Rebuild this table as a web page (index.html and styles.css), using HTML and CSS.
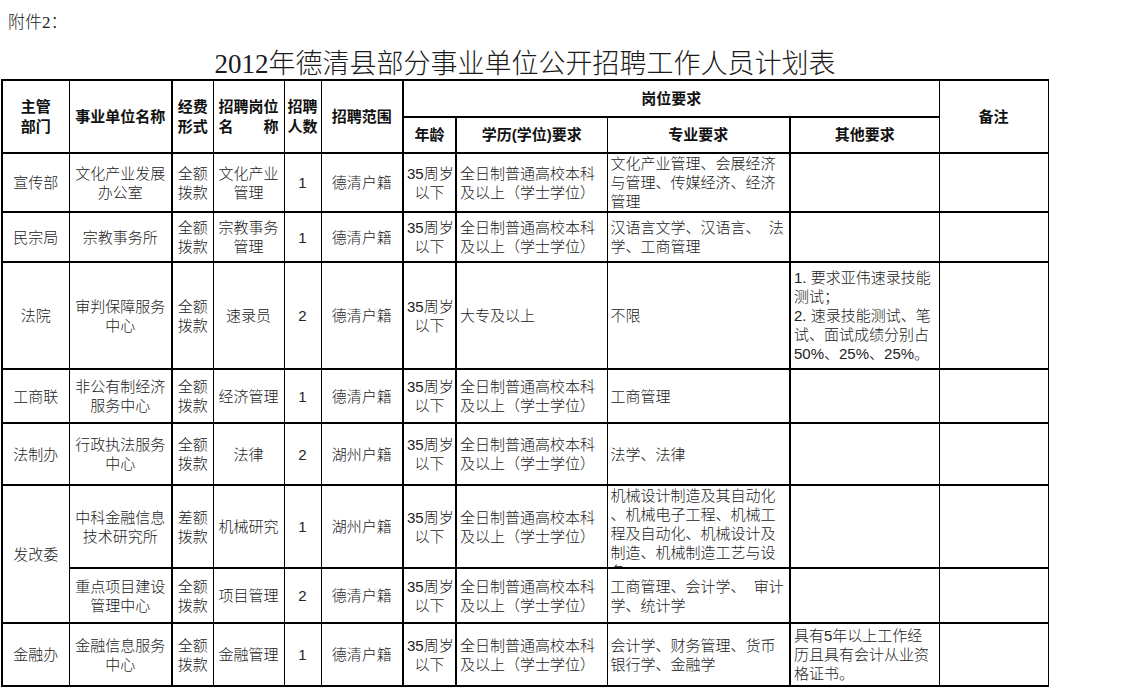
FILE: index.html
```html
<!DOCTYPE html>
<html lang="zh-CN">
<head>
<meta charset="utf-8">
<title>2012年德清县部分事业单位公开招聘工作人员计划表</title>
<link rel="stylesheet" href="styles.css">
</head>
<body>
<div class="page">
  <div class="note">附件2：</div>
  <h1 class="title">2012年德清县部分事业单位公开招聘工作人员计划表</h1>
  <table class="plan">
    <colgroup>
      <col class="c1">
      <col class="c2">
      <col class="c3 thick">
      <col class="c4">
      <col class="c5">
      <col class="c6">
      <col class="c7 thick">
      <col class="c8 thick">
      <col class="c9">
      <col class="c10 thick">
      <col class="c11">
    </colgroup>
    <thead>
      <tr class="h-top">
        <th rowspan="2">主管<br>部门</th>
        <th rowspan="2">事业单位名称</th>
        <th rowspan="2">经费<br>形式</th>
        <th rowspan="2">招聘岗位<br>名　　称</th>
        <th rowspan="2">招聘<br>人数</th>
        <th rowspan="2">招聘范围</th>
        <th colspan="4">岗位要求</th>
        <th rowspan="2" class="last">备注</th>
      </tr>
      <tr class="h-sub">
        <th>年龄</th>
        <th>学历(学位)要求</th>
        <th>专业要求</th>
        <th>其他要求</th>
      </tr>
    </thead>
    <tbody>
      <tr class="r1">
        <td>宣传部</td>
        <td>文化产业发展<br>办公室</td>
        <td>全额<br>拨款</td>
        <td>文化产业<br>管理</td>
        <td>1</td>
        <td>德清户籍</td>
        <td>35周岁<br>以下</td>
        <td class="l">全日制普通高校本科<br>及以上（学士学位）</td>
        <td class="l">文化产业管理、会展经济<br>与管理、传媒经济、经济<br>管理</td>
        <td class="l"></td>
        <td class="last"></td>
      </tr>
      <tr class="r2">
        <td>民宗局</td>
        <td>宗教事务所</td>
        <td>全额<br>拨款</td>
        <td>宗教事务<br>管理</td>
        <td>1</td>
        <td>德清户籍</td>
        <td>35周岁<br>以下</td>
        <td class="l">全日制普通高校本科<br>及以上（学士学位）</td>
        <td class="l">汉语言文学、汉语言、&nbsp;&nbsp;法<br>学、工商管理</td>
        <td class="l"></td>
        <td class="last"></td>
      </tr>
      <tr class="r3">
        <td>法院</td>
        <td>审判保障服务<br>中心</td>
        <td>全额<br>拨款</td>
        <td>速录员</td>
        <td>2</td>
        <td>德清户籍</td>
        <td>35周岁<br>以下</td>
        <td class="l">大专及以上</td>
        <td class="l">不限</td>
        <td class="l">1. 要求亚伟速录技能<br>测试；<br>2. 速录技能测试、笔<br>试、面试成绩分别占<br>50%、25%、25%。</td>
        <td class="last"></td>
      </tr>
      <tr class="r4">
        <td>工商联</td>
        <td>非公有制经济<br>服务中心</td>
        <td>全额<br>拨款</td>
        <td>经济管理</td>
        <td>1</td>
        <td>德清户籍</td>
        <td>35周岁<br>以下</td>
        <td class="l">全日制普通高校本科<br>及以上（学士学位）</td>
        <td class="l">工商管理</td>
        <td class="l"></td>
        <td class="last"></td>
      </tr>
      <tr class="r5">
        <td>法制办</td>
        <td>行政执法服务<br>中心</td>
        <td>全额<br>拨款</td>
        <td>法律</td>
        <td>2</td>
        <td>湖州户籍</td>
        <td>35周岁<br>以下</td>
        <td class="l">全日制普通高校本科<br>及以上（学士学位）</td>
        <td class="l">法学、法律</td>
        <td class="l"></td>
        <td class="last"></td>
      </tr>
      <tr class="r6">
        <td rowspan="2">发改委</td>
        <td>中科金融信息<br>技术研究所</td>
        <td>差额<br>拨款</td>
        <td>机械研究</td>
        <td>1</td>
        <td>湖州户籍</td>
        <td>35周岁<br>以下</td>
        <td class="l">全日制普通高校本科<br>及以上（学士学位）</td>
        <td class="l top"><div class="clip">机械设计制造及其自动化<br>、机械电子工程、机械工<br>程及自动化、机械设计及<br>制造、机械制造工艺与设<br>备</div></td>
        <td class="l"></td>
        <td class="last"></td>
      </tr>
      <tr class="r7">
        <td>重点项目建设<br>管理中心</td>
        <td>全额<br>拨款</td>
        <td>项目管理</td>
        <td>2</td>
        <td>德清户籍</td>
        <td>35周岁<br>以下</td>
        <td class="l">全日制普通高校本科<br>及以上（学士学位）</td>
        <td class="l">工商管理、会计学、&nbsp;&nbsp;审计<br>学、统计学</td>
        <td class="l"></td>
        <td class="last"></td>
      </tr>
      <tr class="r8">
        <td>金融办</td>
        <td>金融信息服务<br>中心</td>
        <td>全额<br>拨款</td>
        <td>金融管理</td>
        <td>1</td>
        <td>德清户籍</td>
        <td>35周岁<br>以下</td>
        <td class="l">全日制普通高校本科<br>及以上（学士学位）</td>
        <td class="l">会计学、财务管理、货币<br>银行学、金融学</td>
        <td class="l">具有5年以上工作经<br>历且具有会计从业资<br>格证书。</td>
        <td class="last"></td>
      </tr>
    </tbody>
  </table>
</div>
</body>
</html>
```

FILE: styles.css
```css
* {
  box-sizing: border-box;
}

html,
body {
  margin: 0;
  padding: 0;
  background: #ffffff;
}

body {
  font-family: "Liberation Sans", "Noto Sans CJK SC", sans-serif;
  color: #222222;
}

.page {
  width: 1131px;
  height: 688px;
  overflow: hidden;
}

.note {
  height: 49px;
  padding: 12px 0 0 8px;
  font-family: "Liberation Serif", "Noto Sans CJK SC", serif;
  font-size: 17px;
  line-height: 22px;
  font-weight: 300;
}

.title {
  margin: 0;
  width: 1050px;
  height: 30px;
  text-align: center;
  font-family: "Liberation Serif", "Noto Sans CJK SC", serif;
  font-weight: 300;
  font-size: 27px;
  line-height: 30px;
  color: #1a1a1a;
}

.plan {
  margin-left: 1px;
  border-collapse: collapse;
  table-layout: fixed;
  width: 1047px;
  border: 2px solid #000;
  border-right-width: 1px;
}

.c1 { width: 67px; }
.c2 { width: 103px; }
.c3 { width: 41px; }
.c4 { width: 71px; }
.c5 { width: 37px; }
.c6 { width: 82px; }
.c7 { width: 53px; }
.c8 { width: 151px; }
.c9 { width: 183px; }
.c10 { width: 149px; }
.c11 { width: 109px; }

.thick {
  border-left: 2px solid #000;
}

.plan th,
.plan td {
  border: 1px solid #000;
  border-top-width: 2px;
  border-bottom-width: 2px;
  padding: 0 3px;
  text-align: center;
  vertical-align: middle;
  font-size: 15px;
  line-height: 19px;
  overflow: hidden;
  white-space: nowrap;
}

.plan th {
  font-weight: 700;
  color: #111111;
  line-height: 20px;
}

.plan td {
  font-weight: 300;
}

.plan .l {
  text-align: left;
}

.plan .top {
  vertical-align: top;
  padding-top: 0;
  padding-bottom: 0;
}

.clip {
  height: 81px;
  overflow: hidden;
}

.h-top { height: 37px; }
.h-sub { height: 36px; }
.r1 { height: 57px; }
.r2 { height: 50px; }
.r3 { height: 107px; }
.r4 { height: 54px; }
.r5 { height: 62px; }
.r6 { height: 83px; }
.r7 { height: 55px; }
.r8 { height: 63px; }
```
